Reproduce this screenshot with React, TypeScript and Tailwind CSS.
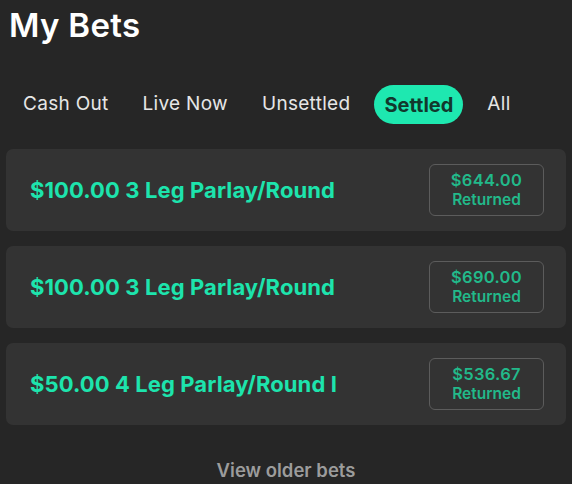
const bets = [
  { title: "$100.00 3 Leg Parlay/Round", amount: "$644.00" },
  { title: "$100.00 3 Leg Parlay/Round", amount: "$690.00" },
  { title: "$50.00 4 Leg Parlay/Round I", amount: "$536.67" },
];

const tabs = ["Cash Out", "Live Now", "Unsettled", "Settled", "All"];

export default function App() {
  return (
    <div className="h-[484px] w-[572px] overflow-hidden bg-[#262626] font-['Inter',sans-serif]">
      <h1 className="px-[9px] pt-[3px] text-[33px] font-semibold leading-[44px] tracking-[0.3px] text-white">My Bets</h1>

      <div className="mt-[38px] flex items-center gap-[14px] px-[13px]">
        {tabs.map((t) => (
          <div
            key={t}
            className={
              t === "Settled"
                ? "flex h-[39px] items-center rounded-full bg-[#1ee8b0] px-[10px] text-[20px] font-bold text-[#12382d]"
                : "flex h-[39px] items-center px-[10px] text-[19px] tracking-[0.3px] text-[#e6e6e6]"
            }
          >
            {t}
          </div>
        ))}
      </div>

      <div className="mt-[25px] flex flex-col gap-[15px] px-[6px]">
        {bets.map((b, i) => (
          <div
            key={i}
            className="flex h-[82px] items-center justify-between rounded-[7px] bg-[#333333] pl-[24px] pr-[22px]"
          >
            <span className="text-[22px] font-bold tracking-[0.1px] text-[#1de4ad]">{b.title}</span>
            <div className="flex h-[52px] w-[115px] flex-col items-center justify-center rounded-[6px] border border-[#5c5c5c] leading-[20px]">
              <span className="text-[16.5px] font-semibold tracking-[0.3px] text-[#22b98a]">{b.amount}</span>
              <span className="text-[15.5px] font-semibold text-[#22b98a]">Returned</span>
            </div>
          </div>
        ))}
      </div>

      <div className="mt-[32px] text-center text-[18.5px] font-semibold text-[#9c9c9c]">View older bets</div>
    </div>
  );
}
